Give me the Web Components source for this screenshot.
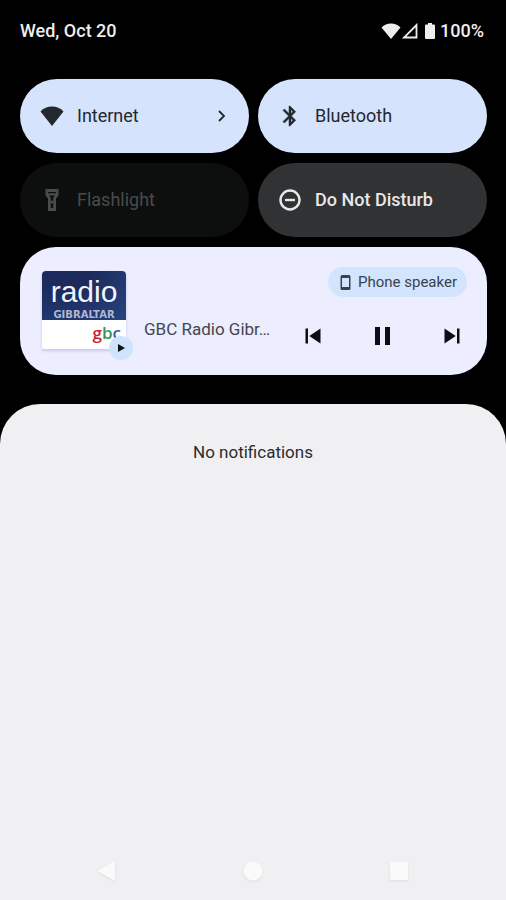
<!DOCTYPE html>
<html lang="en">
<head>
<meta charset="utf-8">
<meta name="viewport" content="width=device-width, initial-scale=1">
<title>Quick settings</title>
<style>
html { height: 100%; }
body { margin: 0; min-height: 100%; display: flex; background: #000; font-family: Roboto, "Liberation Sans", sans-serif; font-size: 17px; line-height: 24px; }
</style>
</head>
<body>
<quick-shade></quick-shade>
<script>
const ICONS = {
  wifi: '<svg width="24" height="20" viewBox="0 0 24 20"><path d="M12 20 0.5 5.5C3.5 2 7.5 0.5 12 0.5S20.5 2 23.5 5.5Z"/></svg>',
  bluetooth: '<svg width="24" height="24" viewBox="0 0 24 24"><path stroke="currentColor" stroke-width=".5" d="M17.71 7.71 12 2h-1v7.59L6.41 5 5 6.41 10.59 12 5 17.59 6.41 19 11 14.41V22h1l5.71-5.71-4.3-4.29 4.3-4.29zM13 5.83l1.88 1.88L13 9.59V5.83zm1.88 10.46L13 18.17v-3.76l1.88 1.88z"/></svg>',
  flashlight: '<svg width="24" height="24" viewBox="0 0 24 24"><path fill-rule="evenodd" d="M5.500 1h13v6.500l-2.500 3V23H8V10.500L5.500 7.500ZM8 4v1.200h8V4ZM9 7.500l1.800 2.300V20h2.400V9.800L15 7.500Z"/><circle cx="12" cy="14" r="1.500"/></svg>',
  dnd: '<svg width="24" height="24" viewBox="0 0 24 24"><circle cx="12" cy="12" r="9.500" fill="none" stroke="currentColor" stroke-width="2.400"/><path d="M7 10.800h10v2.400H7z"/></svg>'
};

function define(name, html, setup) {
  const template = document.createElement('template');
  template.innerHTML = html;
  customElements.define(name, class extends HTMLElement {
    constructor() {
      super();
      this.attachShadow({ mode: 'open' }).append(template.content.cloneNode(true));
    }
    connectedCallback() { if (setup) setup(this, this.shadowRoot); }
  });
}

define('status-bar', `
<style>
:host { display: flex; justify-content: space-between; align-items: center; padding: 0 3px 0 0; color: #ededed; font-size: 18px; font-weight: 500; }
.icons { display: flex; align-items: center; }
svg { fill: currentColor; display: block; }
.battery { margin: 0 5px 0 7px; }
</style>
<time>Wed, Oct 20</time>
<div class="icons">
  <svg width="20" height="16" viewBox="0 0 20 16"><path d="M10 16 .5 4.500C3 1.700 6.300.5 10 .5s7 1.200 9.500 4Z"/></svg>
  <svg width="17" height="16" viewBox="0 0 17 16"><path d="M15.500 2v12.500H3Z" fill="none" stroke="currentColor" stroke-width="1.800"/></svg>
  <svg class="battery" width="10" height="16" viewBox="0 0 10 16"><path d="M3 0h4v1.500h2q1 0 1 1V15q0 1-1 1H1q-1 0-1-1V2.500q0-1 1-1h2Z"/></svg>
  <span>100%</span>
</div>`);

define('quick-tile', `
<style>
:host { display: block; color: #24282e; font-size: 18px; --tile: #d5e3fd; }
:host([state=off]) { color: #e8e8e8; --tile: #303233; font-weight: 500; }
:host([state=disabled]) { color: #4a4b4b; --tile: #0d0f0f; }
button { box-sizing: border-box; width: 100%; height: 74px; padding: 0 20px; border: 0; border-radius: 37px; display: flex; align-items: center; gap: 13px; background: var(--tile); color: inherit; font: inherit; text-align: left; }
.icon { display: flex; justify-content: center; width: 24px; }
.label { flex: 1; }
svg { fill: currentColor; display: block; }
:host(:not([more])) .more { display: none; }
</style>
<button type="button"><span class="icon"></span><span class="label"><slot></slot></span>
<svg class="more" width="14" height="14" viewBox="0 0 14 14"><path d="m4 2 5 5-5 5" fill="none" stroke="currentColor" stroke-width="1.800"/></svg></button>`,
(host, root) => {
  root.querySelector('.icon').innerHTML = ICONS[host.getAttribute('icon')];
  root.querySelector('button').disabled = host.getAttribute('state') === 'disabled';
});

define('album-art', `
<style>
:host { display: block; position: relative; align-self: flex-start; width: 84px; }
.cover { height: 78px; border-radius: 4px 4px 2px 2px; overflow: hidden; background: #fff; box-shadow: 0 2px 3px #c9c6ee; }
.top { height: 49px; box-sizing: border-box; padding-top: 4px; background: radial-gradient(circle at 20% -40%, #1c2a5c 40%, #27437f 100%); color: #f2f4fa; text-align: center; }
.name { font: 30px/34px "Liberation Sans", sans-serif; }
.place { font: bold 10px/11px "DejaVu Sans", sans-serif; color: #aeb8d4; }
.brand { font: 600 17px/26px "Open Sans", sans-serif; display: flex; justify-content: flex-end; padding-right: 5px; }
.g { color: #c8202f; } .b { color: #35965a; } .c { color: #3a5fa5; }
.badge { position: absolute; right: -7px; bottom: -11px; width: 24px; height: 24px; border-radius: 50%; background: #cfe3fd; display: grid; place-items: center; }
</style>
<div class="cover">
  <div class="top"><div class="name">radio</div><div class="place">GIBRALTAR</div></div>
  <div class="brand"><span class="g">g</span><span class="b">b</span><span class="c">c</span></div>
</div>
<div class="badge"><svg width="8" height="8" viewBox="0 0 8 8"><path d="M1 0v8l7-4Z" fill="#101216"/></svg></div>`);

define('media-card', `
<style>
:host { display: flex; gap: 18px; box-sizing: border-box; padding: 20px 20px 20px 22px; min-height: 128px; border-radius: 36px; background: #ecedfe; color: #0c0d10; }
album-art { margin-top: 4px; }
.title { flex: 1; min-width: 0; margin-top: 50px; color: #44464f; white-space: nowrap; }
.side { width: 169px; display: flex; flex-direction: column; align-items: flex-end; gap: 24px; }
button { border: 0; padding: 0; background: none; color: inherit; font: inherit; display: block; }
svg { display: block; fill: currentColor; }
.output { display: flex; align-items: center; gap: 7px; height: 30px; padding: 0 10px 0 12px; border-radius: 15px; background: #d3e4fd; color: #39424f; font-size: 15px; }
.controls { align-self: stretch; display: flex; justify-content: space-between; }
</style>
<album-art></album-art>
<div class="title">GBC Radio Gibr…</div>
<div class="side">
  <button class="output" type="button"><svg width="11" height="15" viewBox="0 0 11 15"><path fill-rule="evenodd" d="M2 0h7q1.500 0 1.500 1.500v12Q10.500 15 9 15H2Q.5 15 .5 13.500v-12Q.5 0 2 0Zm0 3v9h7V3Z"/></svg><span>Phone speaker</span></button>
  <div class="controls">
    <button type="button" aria-label="Previous"><svg width="30" height="30" viewBox="0 0 24 24"><path d="M6 6h2v12H6zM18 6v12L9 12z"/></svg></button>
    <button type="button" aria-label="Pause"><svg width="30" height="30" viewBox="0 0 30 30"><path d="M7 6h5v18H7zM17 6h5v18h-5z"/></svg></button>
    <button type="button" aria-label="Next"><svg width="30" height="30" viewBox="0 0 24 24"><path d="M16 6h2v12h-2zM6 6v12l9-6z"/></svg></button>
  </div>
</div>`);

define('notification-sheet', `
<style>
:host { flex: 1; display: flex; flex-direction: column; justify-content: space-between; border-radius: 40px 40px 0 0; background: #f0f0f2; color: #2b2c2e; }
p { margin: 36px 0 0; text-align: center; }
</style>
<p><slot></slot></p>
<nav-bar></nav-bar>`);

define('nav-bar', `
<style>
:host { display: flex; justify-content: space-between; padding: 0 96px 18px; }
button { border: 0; padding: 0; background: none; }
svg { display: block; fill: #fafafa; filter: drop-shadow(0 1px 1px #dcdcde); }
</style>
<button type="button" aria-label="Back"><svg width="22" height="22" viewBox="0 0 22 22"><path d="M19 1v20L1 11Z"/></svg></button>
<button type="button" aria-label="Home"><svg width="22" height="22" viewBox="0 0 22 22"><circle cx="11" cy="11" r="9.500"/></svg></button>
<button type="button" aria-label="Overview"><svg width="22" height="22" viewBox="0 0 22 22"><rect x="2" y="2" width="18" height="18" rx="1"/></svg></button>`);

define('quick-shade', `
<style>
:host { flex: 1; display: flex; flex-direction: column; }
.panel { padding: 19px 19px 29px 20px; }
.tiles { display: grid; grid-template-columns: 1fr 1fr; gap: 10px 9px; margin: 36px 0 10px; }
</style>
<div class="panel">
  <status-bar></status-bar>
  <div class="tiles">
    <quick-tile icon="wifi" more>Internet</quick-tile>
    <quick-tile icon="bluetooth">Bluetooth</quick-tile>
    <quick-tile icon="flashlight" state="disabled">Flashlight</quick-tile>
    <quick-tile icon="dnd" state="off">Do Not Disturb</quick-tile>
  </div>
  <media-card></media-card>
</div>
<notification-sheet>No notifications</notification-sheet>`);
</script>
</body>
</html>
